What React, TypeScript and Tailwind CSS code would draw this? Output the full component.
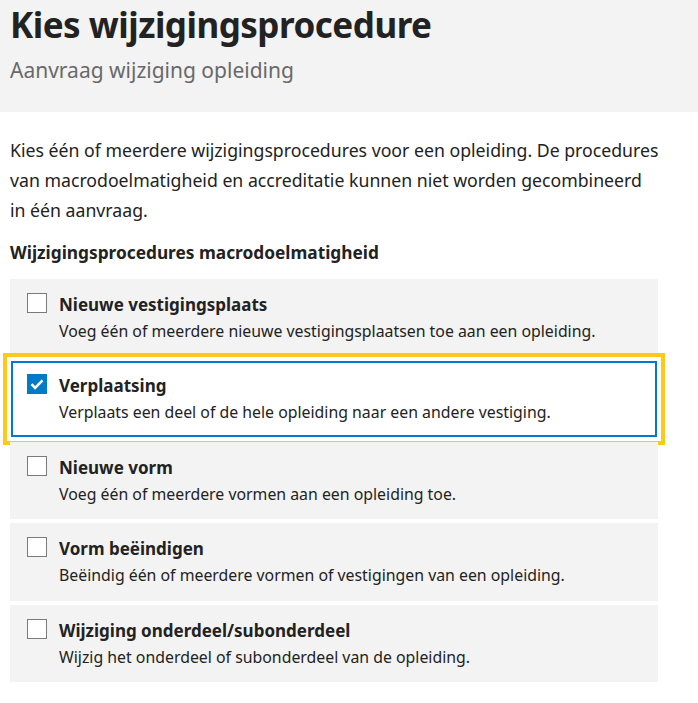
import React from "react";

type Item = { title: string; desc: string; checked?: boolean };

const items: Item[] = [
  { title: "Nieuwe vestigingsplaats", desc: "Voeg één of meerdere nieuwe vestigingsplaatsen toe aan een opleiding." },
  { title: "Verplaatsing", desc: "Verplaats een deel of de hele opleiding naar een andere vestiging.", checked: true },
  { title: "Nieuwe vorm", desc: "Voeg één of meerdere vormen aan een opleiding toe." },
  { title: "Vorm beëindigen", desc: "Beëindig één of meerdere vormen of vestigingen van een opleiding." },
  { title: "Wijziging onderdeel/subonderdeel", desc: "Wijzig het onderdeel of subonderdeel van de opleiding." },
];

function Checkbox({ checked }: { checked?: boolean }) {
  if (checked) {
    return (
      <span className="flex h-5 w-5 shrink-0 items-center justify-center bg-[#007bc7]">
        <svg width="20" height="20" viewBox="0 0 20 20" fill="none">
          <path d="M4.5 10.2l3.6 3.6L15.5 6.4" stroke="white" strokeWidth="2.6" strokeLinecap="butt" strokeLinejoin="miter" />
        </svg>
      </span>
    );
  }
  return <span className="block h-5 w-5 shrink-0 border border-[#7a7a7a] bg-white" />;
}

function Card({ item }: { item: Item }) {
  return (
    <div
      className={
        item.checked
          ? "p-px bg-white outline-4 outline-[#ffc917] outline-offset-[3px]"
          : "p-px bg-[#f3f3f3]"
      }
    >
      <div
        className={
          "flex gap-3 border-2 pl-[14px] pt-[11px] pb-[9.5px] " +
          (item.checked ? "border-[#007bc7] bg-white" : "border-transparent")
        }
      >
        <Checkbox checked={item.checked} />
        <div className="flex flex-col">
          <div className="text-[17px] leading-[23px] font-bold text-[#222]">{item.title}</div>
          <div className="mt-[2px] text-[15.85px] leading-[26px] text-[#222]">{item.desc}</div>
        </div>
      </div>
    </div>
  );
}

export default function App() {
  return (
    <div className="min-h-[703px] bg-white" style={{ fontFamily: '"Noto Sans", sans-serif' }}>
      <div className="bg-[#f3f3f3] px-[10px] pt-[2.5px] pb-[27.5px]">
        <h1 className="text-[35px] leading-[44px] font-bold tracking-[-0.5px] text-[#222]">Kies wijzigingsprocedure</h1>
        <div className="mt-[8px] text-[21px] leading-[30px] text-[#696969]">Aanvraag wijziging opleiding</div>
      </div>
      <div className="px-[10px]">
        <div className="w-[648px]">
          <p className="mt-[23.4px] text-[17.7px] leading-[30px] text-[#222] whitespace-nowrap">
            Kies één of meerdere wijzigingsprocedures voor een opleiding. De procedures
            <br />
            van macrodoelmatigheid en accreditatie kunnen niet worden gecombineerd
            <br />
            in één aanvraag.
          </p>
          <h2 className="mt-4 text-[17.3px] leading-[24px] font-bold text-[#222]">
            Wijzigingsprocedures macrodoelmatigheid
          </h2>
          <div className="mt-[13.6px] flex flex-col gap-1">
            {items.map((it) => (
              <Card key={it.title} item={it} />
            ))}
          </div>
        </div>
      </div>
    </div>
  );
}
